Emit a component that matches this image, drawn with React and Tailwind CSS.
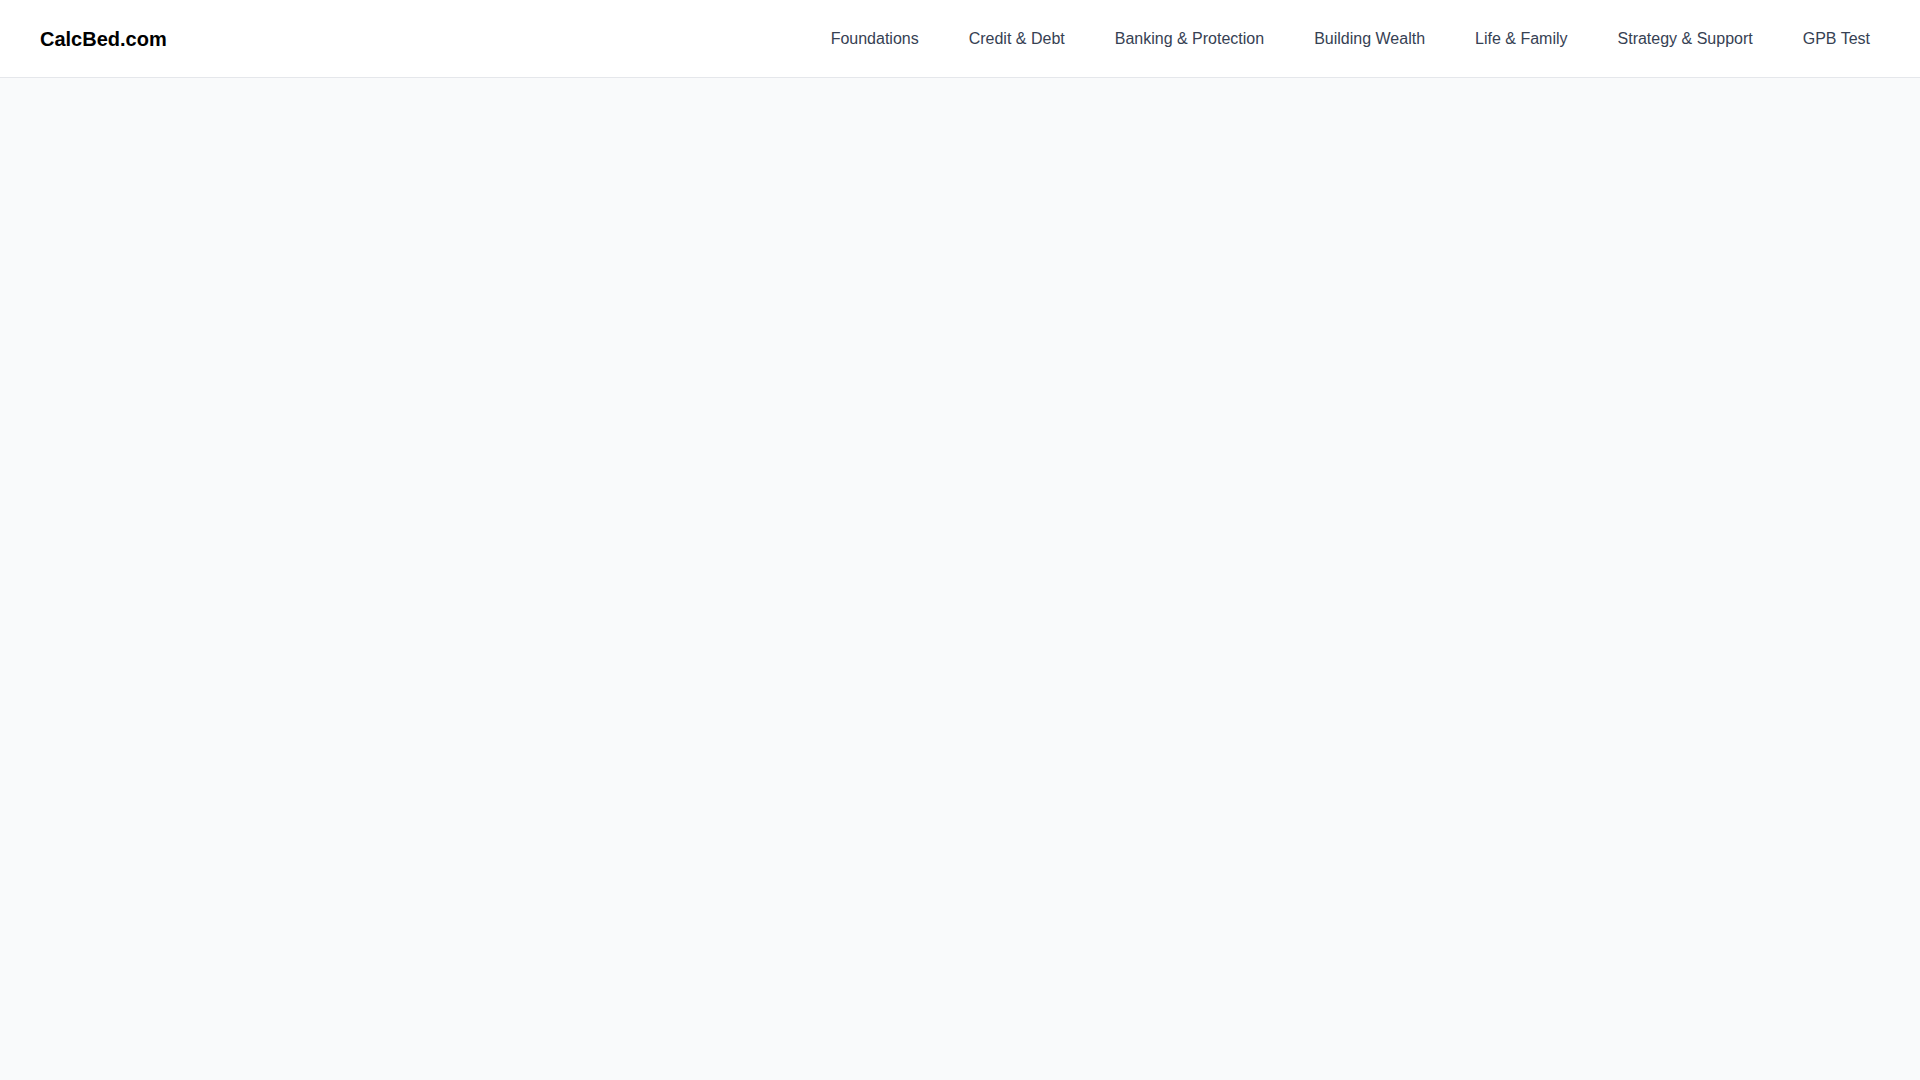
export default function App() {
  const items = ["Foundations", "Credit & Debt", "Banking & Protection", "Building Wealth", "Life & Family", "Strategy & Support", "GPB Test"];
  return (
    <div className="min-h-screen bg-gray-50" style={{ fontFamily: '"Liberation Sans", Arial, sans-serif' }}>
      <header className="h-[78px] bg-white border-b border-gray-200 flex items-center justify-between pl-[40px] pr-[50px]">
        <div className="text-[20px] font-bold text-black">CalcBed.com</div>
        <nav className="flex items-center gap-[50px]">
          {items.map((t) => (
            <a key={t} className="text-[16px] text-gray-700">{t}</a>
          ))}
        </nav>
      </header>
    </div>
  );
}
